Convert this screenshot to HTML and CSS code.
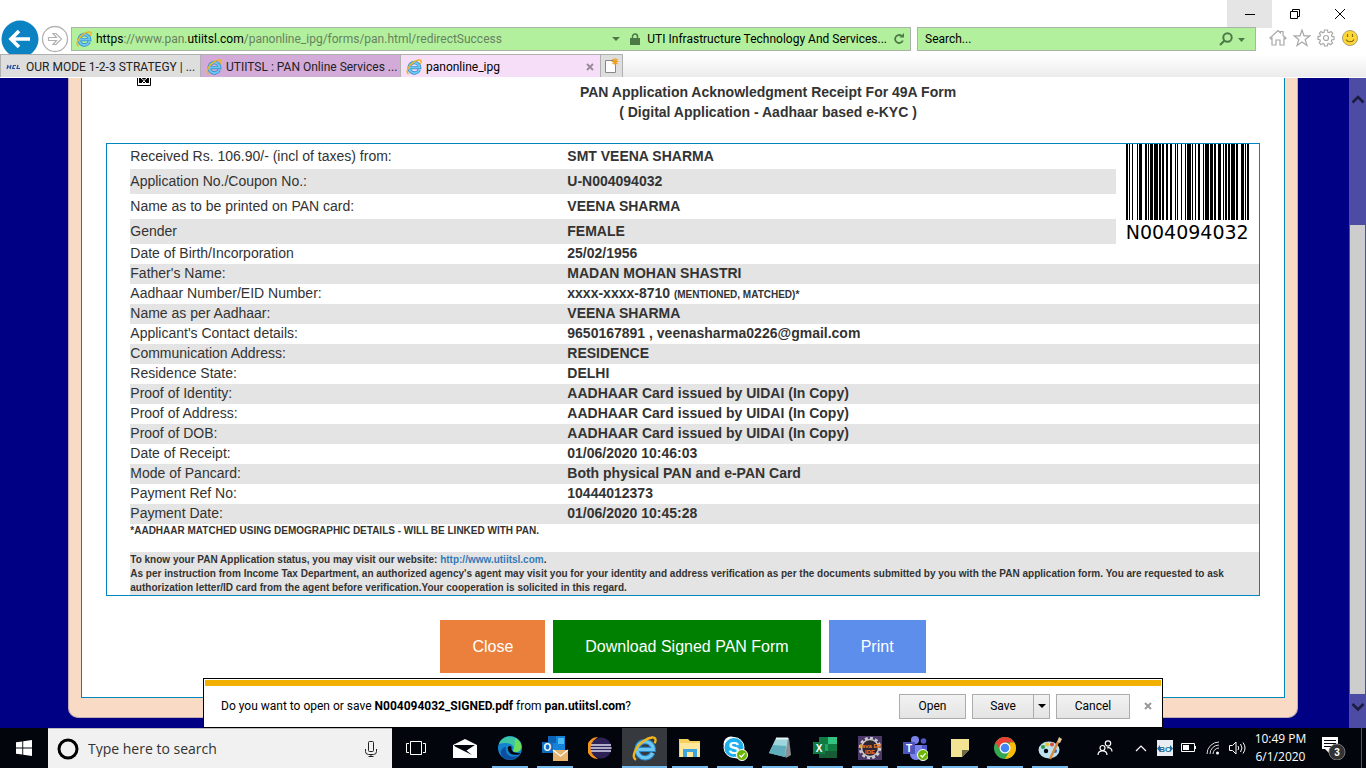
FILE: index.html
```html
<!DOCTYPE html>
<html lang="en">
<head>
<meta charset="utf-8">
<title>panonline_ipg</title>
<link rel="stylesheet" href="styles.css">
</head>
<body>
<svg class="defs" aria-hidden="true">
  <symbol id="ie" viewBox="0 0 16 16">
    <path d="M13.2 10.8A5.2 5.2 0 1 1 13.6 8.6H4" fill="none" stroke="#2b86c8" stroke-width="3.4"/>
    <path d="M13.2 10.8A5.2 5.2 0 1 1 13.6 8.6H4" fill="none" stroke="#6cc8f2" stroke-width="2"/>
    <path d="M2.6 15.2C-.6 13.6 2 7 7.5 3.2c4-2.8 7.6-3 7.6-.7 0 .7-.3 1.500-.6 2.200" fill="none" stroke="#f0b41c" stroke-width="1.500"/>
  </symbol>
  <symbol id="tick" viewBox="0 0 12 12">
    <circle cx="6" cy="6" r="5.500" fill="#6bb700" stroke="#fff"/>
    <path d="M3.500 6.200l1.800 1.800 3.300-3.600" fill="none" stroke="#fff" stroke-width="1.400"/>
  </symbol>
</svg>

<header class="chrome">
  <div class="titlebar">
    <button class="win win-min" aria-label="Minimize"><svg width="12" height="12"><path d="M1 6.500h10" stroke="#000"/></svg></button>
    <button class="win" aria-label="Restore"><svg width="12" height="12" fill="none" stroke="#000"><path d="M1.500 3.500h7v7h-7zM3.500 3.500v-2h7v7h-2"/></svg></button>
    <button class="win" aria-label="Close window"><svg width="12" height="12" stroke="#000"><path d="M1 1l10 10M11 1L1 11"/></svg></button>
  </div>
  <div class="navbar">
    <div class="history">
      <button class="back" aria-label="Back"><svg width="40" height="36"><circle cx="20" cy="19" r="18.500" fill="#0b83c2"/><path d="M30 19H12M19 11l-8 8 8 8" fill="none" stroke="#fff" stroke-width="3.600"/></svg></button>
      <button class="forward" aria-label="Forward"><svg width="28" height="28" fill="none" stroke="#b2b2b2"><circle cx="14" cy="14" r="12.500" stroke-width="1.300"/><path d="M7.500 12.500h8l-3.500-4h3l5.500 5.500-5.500 5.500h-3l3.500-4h-8z" stroke-width="1.200"/></svg></button>
    </div>
    <div class="address">
      <svg width="16" height="16"><use href="#ie"/></svg>
      <div class="url" role="textbox" aria-label="Address"><b>https</b>://www.pan.<b>utiitsl.com</b>/panonline_ipg/forms/pan.html/redirectSuccess</div>
      <button class="tool" aria-label="Show address list"><svg width="8" height="5"><path d="M0 0h8L4 4z" fill="#4c7a47"/></svg></button>
      <button class="cert"><svg width="10" height="12"><path d="M0 5h10v7H0z" fill="#4c7a47"/><path d="M2.500 6V3.500a2.500 2.500 0 0 1 5 0V6" fill="none" stroke="#4c7a47" stroke-width="1.500"/></svg><span>UTI Infrastructure Technology And Services...</span></button>
      <button class="tool" aria-label="Refresh"><svg width="12" height="12"><path d="M9.800 7.500A4 4 0 1 1 8.500 2.800" fill="none" stroke="#4c7a47" stroke-width="1.800"/><path d="M6.500 4.500h4.500V0z" fill="#4c7a47"/></svg></button>
    </div>
    <div class="search">
      <input type="text" value="Search..." aria-label="Search">
      <button class="tool" aria-label="Search"><svg width="26" height="14"><circle cx="8.500" cy="5.500" r="4.200" fill="none" stroke="#4c7a47" stroke-width="2"/><path d="M5.500 8.500L1 13" stroke="#4c7a47" stroke-width="2.200"/><path d="M19 6h7l-3.500 4z" fill="#4c7a47"/></svg></button>
    </div>
    <div class="commands">
      <button aria-label="Home"><svg width="18" height="18" fill="none" stroke="#a8a8a8" stroke-width="1.200"><path d="M1 9l8-7.500 2.500 2.300V2.500h2.500v4L17 9l-1 1-1-.8V16h-4v-5H7v5H3V9.200L2 10z"/></svg></button>
      <button aria-label="Favorites"><svg width="18" height="18" fill="none" stroke="#a8a8a8" stroke-width="1.200"><path d="M9 1l2 5.800h6l-4.800 3.700 1.800 6L9 12.900l-5 3.600 1.800-6L1 6.800h6z"/></svg></button>
      <button aria-label="Tools"><svg width="18" height="18" fill="none" stroke="#a8a8a8" stroke-width="1.200"><path d="M7.500 1h3l.4 2.200 1.200.5L14 2.500 15.800 4.300 14.500 6l.5 1.400 2 .3v2.800l-2.200.3-.5 1.300 1.300 1.800-1.900 1.800-1.800-1.200-1.200.5-.3 2h-2.900L7 15l-1.200-.5-1.800 1.200-1.800-1.900 1.200-1.800-.5-1.300L1 10.400V7.600l2-.4.5-1.300-1.200-1.700L4 2.500l1.800 1.200L7 3.200z"/><circle cx="9" cy="9" r="2.500"/></svg></button>
      <button aria-label="Feedback"><svg width="18" height="18"><circle cx="9" cy="9" r="7.500" fill="#fdd835" stroke="#a8a078"/><path d="M6.500 5v3M11.500 5v3M5 10.500c1.500 3 6.500 3 8 0" fill="none" stroke="#8a6c10" stroke-width="1.200"/></svg></button>
    </div>
  </div>
  <nav class="tabs" aria-label="Tabs">
    <a class="tab" href="#"><svg width="16" height="16"><path d="M1 10l1-4M4 10l1-4M1.500 8h3M10 6.500H7.500l-1 3H9M12 6l-1 3.500h3" fill="none" stroke="#27509b" stroke-width="1.200"/></svg><span>OUR MODE 1-2-3 STRATEGY | ...</span></a>
    <a class="tab tab-violet" href="#"><svg width="16" height="16"><use href="#ie"/></svg><span>UTIITSL : PAN Online Services ...</span></a>
    <a class="tab tab-active" href="#" aria-current="page"><svg width="16" height="16"><use href="#ie"/></svg><span>panonline_ipg</span><svg class="tab-x" width="8" height="8"><path d="M1 1l6 6M7 1L1 7" stroke="#97899a" stroke-width="1.800"/></svg></a>
    <button class="newtab" aria-label="New tab"><svg width="16" height="16"><path d="M1.500 2.500h10v12h-10z" fill="#fff" stroke="#888"/><path d="M11 0v7M7.500 3.500h7M8.500 1l5 5M13.500 1l-5 5" stroke="#f0a020" stroke-width="1.200"/></svg></button>
  </nav>
</header>

<div class="viewport">
  <main class="panel">
    <div class="sheet">
      <div class="heading">
        <div class="logo"><svg width="14" height="8"><path d="M.5 0v7.500h13V0" fill="#fff" stroke="#000"/><path d="M2 0h10v5H2z"/><path d="M4 0l3 2.500L10 0M5 5l2-2 2 2" stroke="#fff" fill="none"/></svg></div>
        <h1>PAN Application Acknowledgment Receipt For 49A Form<br>( Digital Application - Aadhaar based e-KYC )</h1>
      </div>
      <section class="receipt">
        <table>
          <colgroup><col class="col-label"><col><col class="col-code"></colgroup>
          <tbody class="tall">
            <tr><th scope="row">Received Rs. 106.90/- (incl of taxes) from:</th><td>SMT VEENA SHARMA</td>
              <td class="code" rowspan="4"><svg width="123" height="76" shape-rendering="crispEdges"><path d="M0 0h2v76h-2zM3 0h1v76h-1zM6 0h1v76h-1zM11 0h1v76h-1zM13 0h3v76h-3zM19 0h2v76h-2zM22 0h1v76h-1zM24 0h3v76h-3zM28 0h4v76h-4zM33 0h2v76h-2zM36 0h2v76h-2zM40 0h2v76h-2zM44 0h2v76h-2zM49 0h1v76h-1zM51 0h1v76h-1zM55 0h1v76h-1zM59 0h1v76h-1zM61 0h4v76h-4zM66 0h1v76h-1zM69 0h1v76h-1zM72 0h2v76h-2zM77 0h1v76h-1zM79 0h4v76h-4zM84 0h3v76h-3zM88 0h2v76h-2zM92 0h3v76h-3zM97 0h1v76h-1zM99 0h2v76h-2zM102 0h2v76h-2zM105 0h4v76h-4zM110 0h2v76h-2zM115 0h3v76h-3zM119 0h1v76h-1zM121 0h2v76h-2z"/></svg><span>N004094032</span></td></tr>
            <tr><th scope="row">Application No./Coupon No.:</th><td>U-N004094032</td></tr>
            <tr><th scope="row">Name as to be printed on PAN card:</th><td>VEENA SHARMA</td></tr>
            <tr><th scope="row">Gender</th><td>FEMALE</td></tr>
          </tbody>
          <tbody>
            <tr><th scope="row">Date of Birth/Incorporation</th><td colspan="2">25/02/1956</td></tr>
            <tr><th scope="row">Father's Name:</th><td colspan="2">MADAN MOHAN SHASTRI</td></tr>
            <tr><th scope="row">Aadhaar Number/EID Number:</th><td colspan="2">xxxx-xxxx-8710 <small>(MENTIONED, MATCHED)*</small></td></tr>
            <tr><th scope="row">Name as per Aadhaar:</th><td colspan="2">VEENA SHARMA</td></tr>
            <tr><th scope="row">Applicant's Contact details:</th><td colspan="2">9650167891 , veenasharma0226@gmail.com</td></tr>
            <tr><th scope="row">Communication Address:</th><td colspan="2">RESIDENCE</td></tr>
            <tr><th scope="row">Residence State:</th><td colspan="2">DELHI</td></tr>
            <tr><th scope="row">Proof of Identity:</th><td colspan="2">AADHAAR Card issued by UIDAI (In Copy)</td></tr>
            <tr><th scope="row">Proof of Address:</th><td colspan="2">AADHAAR Card issued by UIDAI (In Copy)</td></tr>
            <tr><th scope="row">Proof of DOB:</th><td colspan="2">AADHAAR Card issued by UIDAI (In Copy)</td></tr>
            <tr><th scope="row">Date of Receipt:</th><td colspan="2">01/06/2020 10:46:03</td></tr>
            <tr><th scope="row">Mode of Pancard:</th><td colspan="2">Both physical PAN and e-PAN Card</td></tr>
            <tr><th scope="row">Payment Ref No:</th><td colspan="2">10444012373</td></tr>
            <tr><th scope="row">Payment Date:</th><td colspan="2">01/06/2020 10:45:28</td></tr>
          </tbody>
        </table>
        <p class="note">*AADHAAR MATCHED USING DEMOGRAPHIC DETAILS - WILL BE LINKED WITH PAN.</p>
        <p class="info">To know your PAN Application status, you may visit our website: <a href="http://www.utiitsl.com">http://www.utiitsl.com</a>.<br>As per instruction from Income Tax Department, an authorized agency's agent may visit you for your identity and address verification as per the documents submitted by you with the PAN application form. You are requested to ask authorization letter/ID card from the agent before verification.Your cooperation is solicited in this regard.</p>
      </section>
      <div class="actions">
        <button class="act act-close">Close</button>
        <button class="act act-download">Download Signed PAN Form</button>
        <button class="act act-print">Print</button>
      </div>
    </div>
  </main>
  <div class="scrollbar" aria-hidden="true">
    <svg width="17" height="42"><path d="M3.500 24.500L9 19l5.500 5.500" fill="none" stroke="#1c1c40" stroke-width="2.600"/></svg>
    <div class="thumb"></div>
    <svg width="17" height="34"><path d="M3.500 10L9 15.500l5.500-5.500" fill="none" stroke="#1c1c40" stroke-width="2.600"/></svg>
  </div>
  <div class="download" role="dialog" aria-label="Download">
    <div class="download-row">
      <p>Do you want to open or save <b>N004094032_SIGNED.pdf</b> from <b>pan.utiitsl.com</b>?</p>
      <button class="dbtn dbtn-open">Open</button>
      <div class="split"><button class="dbtn dbtn-save">Save</button><button class="dbtn dbtn-more" aria-label="Save options"><svg width="8" height="5"><path d="M0 0h8L4 4z"/></svg></button></div>
      <button class="dbtn dbtn-cancel">Cancel</button>
      <button class="dismiss" aria-label="Dismiss"><svg width="8" height="8"><path d="M1 1l6 6M7 1L1 7" stroke="#999" stroke-width="2"/></svg></button>
    </div>
  </div>
</div>

<footer class="taskbar">
  <button class="start" aria-label="Start"><svg width="16" height="16" fill="#fff"><path d="M0 2.300L6.300 1.400V7.500H0zM7.200 1.200L16 0v7.500H7.200zM0 8.500h6.300v6.100L0 13.700zM7.200 8.500H16V16l-8.800-1.200z"/></svg></button>
  <label class="cortana">
    <svg width="24" height="24"><circle cx="12" cy="12" r="9" fill="none" stroke="#000" stroke-width="3"/></svg>
    <input type="text" value="Type here to search" aria-label="Type here to search">
    <svg width="12" height="16" fill="none" stroke="#222"><rect x="3.500" y=".5" width="5" height="10" rx="1"/><path d="M.5 8v2.500q0 3 3 3h5q3 0 3-3V8M6 13.500v2M3.500 15.500h5"/></svg>
  </label>
  <button class="taskview" aria-label="Task View"><svg width="20" height="14" fill="none" stroke="#fff"><path d="M4.500.5h11v13h-11zM3 2.500H.5v9H3M17 2.500h2.500v9H17"/></svg></button>
  <div class="apps">
    <button class="app" aria-label="Mail"><svg width="24" height="24"><path d="M0 9l12-6 12 6v13H0z" fill="#fff"/><path d="M1 9h21l-8.500 5.500L19 19 2 10.500z" fill="#02060c"/></svg></button>
    <button class="app open" aria-label="Edge"><svg width="24" height="24"><circle cx="12" cy="12" r="12" fill="#1582cf"/><path d="M1 8C4-1 16-2 21.500 5 25 9 24 15 19 16c-3 .5-5-.8-3.500-2.500C17.500 9 10 5 1 8z" fill="#3cc6a4"/><path d="M17 2c8 4 8 13 2 14-3 .5-5-.8-3.500-2.500C17 11 17 6 17 2z" fill="#6bdc5c"/><path d="M8 11c-2 8 6 12 13 8-3 4-8 6-13 4C0 20 2 12 8 11z" fill="#0d4f9e"/><path d="M10 11c-1 5 3 9 11 7.500l1.500-1C19 17 13 17 13.500 12c.5-2-2-3-3.500-1z" fill="#02060c"/></svg></button>
    <button class="app open" aria-label="Outlook"><svg width="28" height="26"><path d="M7 1h17v16H7z" fill="#1683d8"/><path d="M7 1h8v7H7z" fill="#0c62b5"/><path d="M17 3h6v6h-6z" fill="#4cbcf4"/><path d="M1 7h11v11H1z" fill="#0f6cbd"/><text x="6.500" y="16" class="glyph">O</text><path d="M12 15h15v11H12z" fill="#e8b36c"/><path d="M12 15l7.500 6 7.500-6" fill="none" stroke="#fff" stroke-width="1.200"/></svg></button>
    <button class="app" aria-label="Eclipse"><svg width="24" height="24"><path d="M10 1a11 11 0 0 0 0 22A13 13 0 0 1 10 1z" fill="#f7941e"/><circle cx="13" cy="12" r="10.500" fill="#2c2255"/><path d="M3 9h20M2.500 12h21M3 15h20" stroke="#dcdcf0" stroke-width="1.500"/></svg></button>
    <button class="app open active" aria-label="Internet Explorer"><svg width="25" height="25"><use href="#ie"/></svg></button>
    <button class="app open" aria-label="File Explorer"><svg width="24" height="24"><path d="M1 3h9l2 2h10v16H1z" fill="#f5cf5c"/><path d="M2 7h20v14H2z" fill="#fde79a"/><path d="M5 13h14v8h-4v-5H9v5H5z" fill="#3fa3dc"/></svg></button>
    <button class="app open" aria-label="Skype"><svg width="26" height="26"><circle cx="9" cy="9" r="7.500" fill="#fff"/><circle cx="15" cy="16" r="7.500" fill="#fff"/><circle cx="12" cy="12.500" r="10" fill="#1eb0ec" stroke="#fff"/><text x="12" y="18.500" class="glyph glyph-lg">S</text><svg x="14" y="14" width="12" height="12"><use href="#tick"/></svg></svg></button>
    <button class="app open" aria-label="Notepad"><svg width="24" height="24"><path d="M8 2h13l2 17-5 3z" fill="#8a8f92"/><path d="M8 2h12l-3 19L1 17z" fill="#9fd6de"/><path d="M5 9l13 1-1 11L1 17z" fill="#5eaebc"/><path d="M8 2.500h12" stroke="#e8f4f4" stroke-width="2"/></svg></button>
    <button class="app open" aria-label="Excel"><svg width="24" height="24"><path d="M6 1h18v21H6z" fill="#21a366"/><path d="M6 1h9v7H6z" fill="#107c41"/><path d="M15 1h9v7h-9z" fill="#33c481"/><path d="M6 15h18v7H6z" fill="#185c37"/><path d="M15 8h9v7h-9z" fill="#107c41"/><path d="M0 6h12v12H0z" fill="#107c41"/><text x="6" y="16" class="glyph">X</text></svg></button>
    <button class="app open" aria-label="Java EE IDE"><svg width="24" height="24"><path d="M0 0h24v24H0z" fill="#4b3768"/><circle cx="12" cy="12" r="10" fill="none" stroke="#ccc" stroke-width="2.500" stroke-dasharray="3 2.200"/><circle cx="12" cy="12" r="8.500" fill="#2c2430" stroke="#c8c8c8" stroke-width="1.500"/><text x="12" y="12" class="glyph glyph-java">Java EE</text><text x="12" y="18" class="glyph glyph-java">IDE</text></svg></button>
    <button class="app open" aria-label="Teams"><svg width="26" height="26"><circle cx="13" cy="5" r="4" fill="#7b83eb"/><circle cx="21.500" cy="6" r="2.800" fill="#5059c9"/><path d="M17 10h8v7a4 4 0 0 1-8 2z" fill="#5059c9"/><path d="M8 10h12v8a6 6 0 0 1-12 2z" fill="#7b83eb"/><path d="M1 7h12v12H1z" fill="#4b53bc"/><text x="7" y="17" class="glyph">T</text><svg x="15" y="14" width="12" height="12"><use href="#tick"/></svg></svg></button>
    <button class="app open" aria-label="Sticky Notes"><svg width="20" height="20"><path d="M1 1h18v11l-7 7H1z" fill="#f2e394"/><path d="M12 12h7l-7 7z" fill="#6f6a45"/></svg></button>
    <button class="app open" aria-label="Chrome"><svg width="24" height="24"><circle cx="12" cy="12" r="11" fill="#34a853"/><path d="M2.500 6.500A11 11 0 0 1 21.500 6.500H12L7.300 14.700z" fill="#ea4335"/><path d="M21.500 6.500A11 11 0 0 1 12 23l4.700-8.300V6.500z" fill="#fbbc05"/><circle cx="12" cy="12" r="5.500" fill="#fff"/><circle cx="12" cy="12" r="4.300" fill="#4285f4"/></svg></button>
    <button class="app open" aria-label="Paint"><svg width="24" height="24"><ellipse cx="11" cy="14" rx="10.500" ry="8.500" fill="#bfe0ee"/><circle cx="5" cy="11" r="2" fill="#2c9b46"/><circle cx="9" cy="8.500" r="2" fill="#e8c42c"/><circle cx="14" cy="8.500" r="2" fill="#dd4b39"/><circle cx="8" cy="15" r="2.200" fill="#02060c"/><circle cx="17" cy="15" r="2" fill="#3567c9"/><path d="M12 23L20 6" stroke="#d78a3a" stroke-width="2.400"/><path d="M19 6l2-5 3 2-2 4z" fill="#e8c79a"/></svg></button>
  </div>
  <div class="tray">
    <button class="people" aria-label="People"><svg width="16" height="16" fill="none" stroke="#fff" stroke-width="1.200"><circle cx="5.500" cy="8" r="2.500"/><path d="M1 15c0-5.500 9-5.500 9 0"/><circle cx="11" cy="3.500" r="2.700"/><path d="M10 8c2.500-1 5 .5 5 3.500"/></svg></button>
    <button class="icon" aria-label="Show hidden icons"><svg width="12" height="8"><path d="M1 7l5-5 5 5" fill="none" stroke="#fff" stroke-width="1.200"/></svg></button>
    <button class="icon" aria-label="BC"><svg width="16" height="16"><path d="M0 0h16v16H0z" fill="#e8eef2"/><path d="M3 5L0 8.500 3 12zM13 5l3 3.500-3 3.500z" fill="#1c6c9c"/><text x="8" y="12" class="glyph glyph-bc">BC</text></svg></button>
    <button class="icon" aria-label="Battery"><svg width="16" height="10"><path d="M.5.500h13v8H.5z" fill="none" stroke="#fff"/><path d="M2 2h6v5H2zM14 3h1v3h-1z" fill="#fff"/></svg></button>
    <button class="icon" aria-label="Network"><svg width="14" height="14" fill="none" stroke="#ddd"><path d="M1 13A12 12 0 0 1 13 1M4 13a9 9 0 0 1 9-9M7 13a6 6 0 0 1 6-6"/><circle cx="11.500" cy="12" r="1.500" fill="#fff" stroke="none"/></svg></button>
    <button class="icon" aria-label="Volume"><svg width="17" height="14" fill="none" stroke="#fff"><path d="M.5 4.500h3L7 1v12L3.500 9.500h-3zM9 5q1.500 2 0 4M11.500 3q3 4 0 8M14 1.500q4 5.500 0 11"/></svg></button>
    <button class="clock">10:49 PM<br>6/1/2020</button>
    <button class="notify" aria-label="3 new notifications"><svg width="26" height="24"><path d="M1 1h16v12H8v4l-4-4H1z" fill="#fff"/><path d="M3 4.500h12M3 7.500h12M3 10.500h8" stroke="#02060c"/><circle cx="16" cy="16" r="8" fill="#333" stroke="#777"/><text x="16" y="20" class="glyph">3</text></svg></button>
  </div>
</footer>
</body>
</html>
```
FILE: styles.css
```css
* { box-sizing: border-box; }
body {
  margin: 0;
  height: 100vh;
  display: flex;
  flex-direction: column;
  overflow: hidden;
  background: #fff;
  font: 12px/16px Roboto, "Open Sans", sans-serif;
  color: #000;
}
button, input { font: inherit; color: inherit; border: 0; padding: 0; background: none; }
button { display: flex; align-items: center; justify-content: center; white-space: nowrap; }
p, h1 { margin: 0; }
svg { display: block; flex: none; }
.defs { position: absolute; width: 0; height: 0; }

/* Browser chrome */
.chrome { flex: none; position: relative; }
.titlebar { display: flex; justify-content: flex-end; height: 27px; padding-right: 4px; }
.win { width: 45px; height: 28px; }
.win-min { background: #e5e5e5; }
.navbar { display: flex; height: 27px; gap: 6px; align-items: flex-start; }
.history { width: 65px; height: 25px; position: relative; }
.back { position: absolute; left: 0; top: -7px; height: 34px; overflow: hidden; align-items: flex-start; }
.forward { position: absolute; left: 41px; top: -2px; }
.address, .search {
  position: relative;
  display: flex;
  align-items: center;
  height: 24px;
  border: 1px solid #a9b3a7;
  background: #b3f09e;
}
.address { flex: 1; padding: 0 3px 0 4px; gap: 4px; min-width: 0; }
.url { flex: 1; color: #66825f; white-space: nowrap; overflow: hidden; }
.url b { font-weight: 400; color: #000; }
.tool { width: 16px; height: 22px; }
.cert { gap: 7px; margin-left: 2px; }
.search { width: 339px; padding: 0 10px 0 7px; }
.search input { flex: 1; min-width: 0; }
.search .tool { width: 26px; }
.commands { display: flex; gap: 6px; padding: 2px 7px 0 7px; }
.tabs { display: flex; height: 24px; border-bottom: 1px solid #fff; background: linear-gradient(#fff, #ececec); }
.tab {
  display: flex;
  align-items: center;
  gap: 4px;
  width: 200px;
  padding: 2px 6px 0 5px;
  border: solid #b0b0b0;
  border-width: 1px 0 0 1px;
  background: #dedede;
  color: #222;
  text-decoration: none;
  white-space: nowrap;
}
.tab-violet { background: #d2abd9; }
.tab-active { background: #f6def9; color: #000; }
.tab-x { margin-left: auto; }
.newtab { width: 23px; border: solid #b0b0b0; border-width: 1px 1px 0 1px; background: #dedede; }

/* Web page */
.viewport {
  flex: 1;
  min-height: 0;
  position: relative;
  overflow: hidden;
  background: #000084;
  font-family: "Liberation Sans", Arial, sans-serif;
  color: #333;
}
.panel {
  width: 90%;
  margin: 0 auto;
  padding: 0 12px 19px;
  border: 1px solid #bfaab5;
  border-top: 0;
  border-radius: 0 0 10px 10px;
  background: #f9dac5;
}
.sheet { padding: 0 24px 24px; border: 1px solid #0085bf; border-top: 0; background: #fff; }
.heading { display: flex; gap: 24px; }
.logo { width: 122px; padding-left: 31px; }
.heading h1 { flex: 1; margin-right: -24px; padding-top: 4px; font-size: 14px; line-height: 20px; text-align: center; }
.receipt { margin-top: 21px; padding-left: 23px; border: 1px solid #0085bf; }
table { width: 100%; table-layout: fixed; border-collapse: collapse; font-size: 14px; line-height: 18px; }
.col-label { width: 437px; }
.col-code { width: 143px; }
th { padding: 0 0 2px; font-weight: 400; text-align: left; }
td { padding: 0 0 2px; font-weight: 700; }
.tall th, .tall td { height: 25px; }
tr:nth-child(even) > * { background: #e4e4e4; }
td small { font-size: 10px; line-height: 10px; }
.tall td.code { padding: 0 0 0 10px; vertical-align: top; }
.code span { display: block; font: 19px/24px "DejaVu Sans", sans-serif; color: #000; }
.note, .info { font-size: 10px; line-height: 14px; font-weight: 700; }
.info { margin-top: 14px; padding-top: 1px; background: #e4e4e4; }
.info a { color: #337ab7; text-decoration: none; }
.actions { display: flex; justify-content: center; gap: 8px; margin-top: 24px; }
.act { height: 53px; padding: 0 32px; font-size: 16px; color: #fff; }
.act-close { background: #eb7f3c; }
.act-download { background: #008000; }
.act-print { background: #5e8eec; }

.scrollbar {
  position: absolute;
  top: 0;
  right: 0;
  bottom: 0;
  width: 17px;
  display: flex;
  flex-direction: column;
  background: #4c4ca4;
}
.thumb { flex: 1; margin: 105px 1px 0; background: #cdcdcd; }

/* Download prompt */
.download {
  position: absolute;
  left: 50%;
  bottom: 0;
  width: 960px;
  margin-left: -480px;
  padding: 1px;
  border: 1px solid #000;
  background: #fff;
  color: #000;
  font-family: Roboto, "Open Sans", sans-serif;
}
.download-row { display: flex; align-items: center; gap: 6px; height: 46px; padding: 0 5px 0 16px; border-top: 6px solid #f2b000; }
.download-row p { flex: 1; white-space: nowrap; }
.dbtn { height: 25px; border: 1px solid #acacac; background: linear-gradient(#f2f2f2, #e4e4e4); }
.split { display: flex; }
.dbtn-open { width: 67px; }
.dbtn-save { width: 62px; }
.dbtn-more { width: 17px; margin-left: -1px; }
.dbtn-cancel { width: 74px; }
.dismiss { width: 16px; height: 16px; margin-left: 4px; }

/* Taskbar */
.taskbar { flex: none; display: flex; height: 40px; background: #02060c; color: #fff; font-family: "Open Sans", "Noto Sans", sans-serif; }
.start { width: 48px; }
.cortana {
  display: flex;
  align-items: center;
  gap: 8px;
  width: 344px;
  padding: 0 15px 0 8px;
  border-top: 1px solid #bcbcbc;
  background: #f1f1f1;
  color: #333;
  font-size: 14px;
}
.cortana input { flex: 1; min-width: 0; }
.taskview { width: 48px; }
.apps { display: flex; margin-left: 2px; }
.app { position: relative; width: 45px; height: 40px; }
.app.open::after { content: ""; position: absolute; left: 5px; right: 4px; bottom: 0; height: 2px; background: #76b9ed; }
.app.active { background: #36393e; }
.app.active::after { left: 0; right: 0; }
.tray { display: flex; margin-left: auto; padding-right: 4px; }
.people { width: 36px; margin-right: 6px; }
.icon { width: 24px; }
.clock { width: 63px; font-size: 12px; line-height: 18px; }
.notify { width: 50px; padding-right: 6px; border-right: 1px solid #555; }
.glyph { font: 700 10px "Liberation Sans", sans-serif; fill: #fff; text-anchor: middle; }
.glyph-lg { font-size: 17px; }
.glyph-java { font-size: 6px; fill: #f08020; }
.glyph-bc { font-size: 8px; fill: #1c6c9c; }
```
